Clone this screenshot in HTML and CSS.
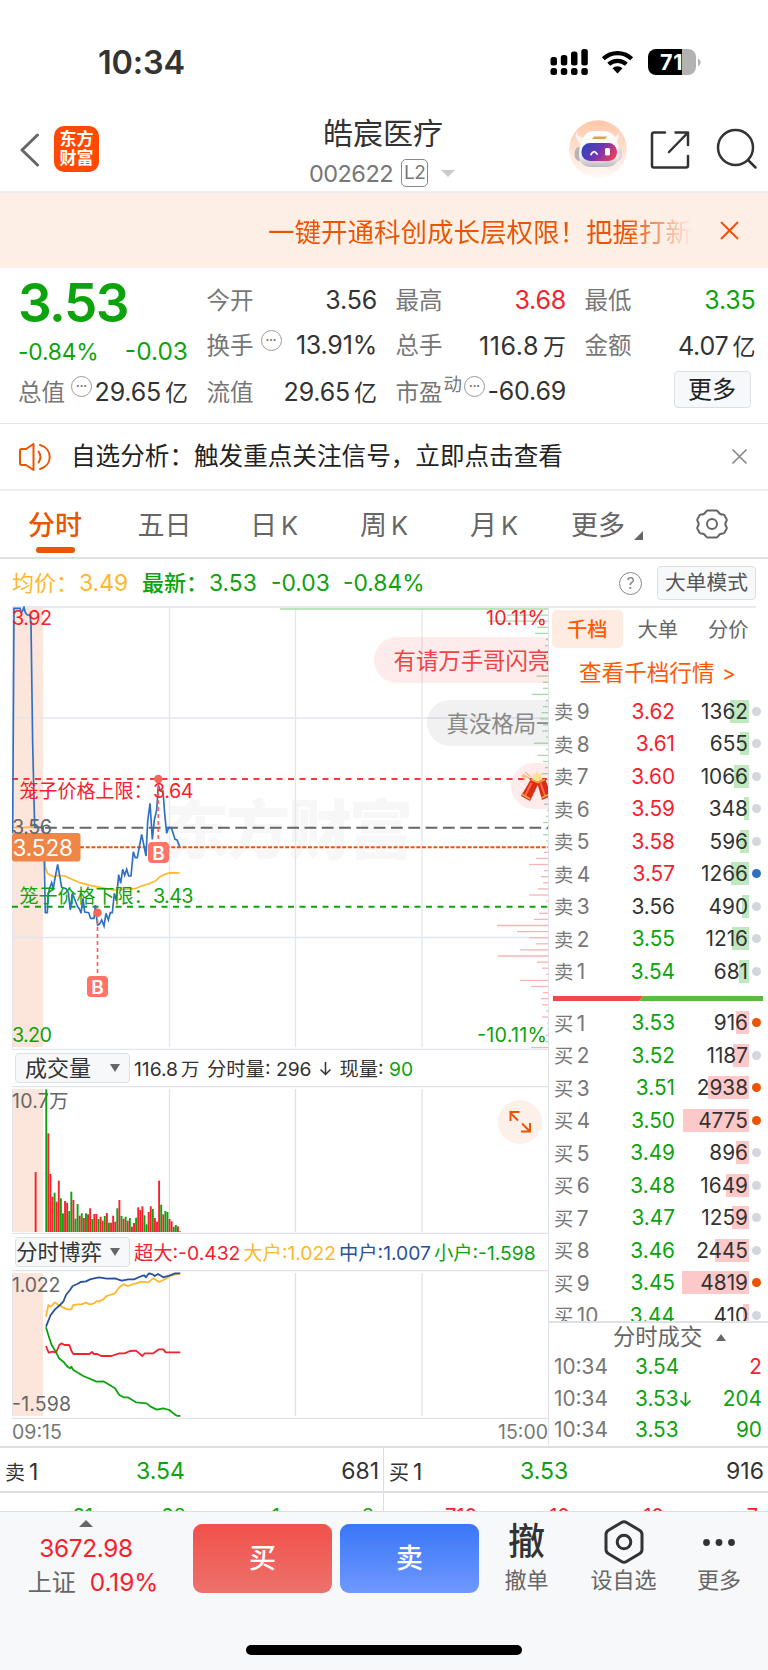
FILE: index.html
```html
<!DOCTYPE html>
<html lang="zh-CN">
<head>
<meta charset="utf-8">
<title>皓宸医疗 002622</title>
<link rel="stylesheet" href="styles.css">
</head>
<body>
<div class="screen">
  <div class="status">
    <span class="clock">10:34</span>
    <svg class="status-icons" width="152" height="28" viewBox="0 0 152 28">
      <g fill="#000">
        <rect x="0.5" y="9" width="6.5" height="8.500" rx="2.500"/><rect x="10.800" y="7" width="6.500" height="10.500" rx="2.500"/><rect x="21" y="3.500" width="6.500" height="14" rx="2.500"/><rect x="31.300" y="1" width="6.500" height="16.500" rx="2.500"/>
        <rect x="0.500" y="20" width="6.500" height="7" rx="2.500"/><rect x="10.800" y="20" width="6.500" height="7" rx="2.500"/><rect x="21" y="20" width="6.500" height="7" rx="2.500"/><rect x="31.300" y="20" width="6.500" height="7" rx="2.500"/>
      </g>
      <g fill="none" stroke="#000" stroke-width="4.200">
        <path d="M53.300 10.800a20.500 20.500 0 0 1 28.400 0"/><path d="M58.700 16.300a12.800 12.800 0 0 1 17.600 0"/>
      </g>
      <path d="M62.500 20.300a7.200 7.200 0 0 1 10 0l-5 5.200z" fill="#000"/>
      <clipPath id="bat"><rect x="98" y="1" width="48" height="26" rx="8"/></clipPath>
      <g clip-path="url(#bat)"><rect x="97" y="0" width="35" height="28" fill="#000"/><rect x="132" y="0" width="15" height="28" fill="#b2b2b2"/></g>
      <path d="M148 10.500q2.600 1 2.600 3.700t-2.600 3.700z" fill="#b2b2b2"/>
      <text x="110" y="21.800" font-size="21.500" font-weight="700" fill="#fff" textLength="22.500">71</text>
    </svg>
  </div>

  <div class="header">
    <div class="head-left">
      <svg width="21" height="34" viewBox="0 0 21 34"><path d="M18.500 2L3 17l15.500 15" fill="none" stroke="#666" stroke-width="3" stroke-linecap="round" stroke-linejoin="round"/></svg>
      <div class="logo"><span>东方</span><span>财富</span></div>
    </div>
    <div class="head-mid">
      <div class="stock-name">皓宸医疗</div>
      <div class="stock-code"><span class="code">002622</span><span class="l2">L2</span><i class="tri-down"></i></div>
    </div>
    <div class="head-right">
      <svg width="58" height="58" viewBox="0 0 58 58">
        <defs>
          <linearGradient id="halo" x1="0" y1="0" x2="0" y2="1"><stop offset="0" stop-color="#ffc7a8"/><stop offset="1" stop-color="#fffaf6"/></linearGradient>
          <linearGradient id="visor" x1="0" y1="0.200" x2="1" y2="0.600"><stop offset="0" stop-color="#2a45b8"/><stop offset="0.500" stop-color="#6b35b5"/><stop offset="1" stop-color="#ee3d5c"/></linearGradient>
          <linearGradient id="shell" x1="0" y1="0" x2="0" y2="1"><stop offset="0" stop-color="#fff"/><stop offset="0.700" stop-color="#f1eeee"/><stop offset="1" stop-color="#bdb9c0"/></linearGradient>
        </defs>
        <circle cx="29" cy="29" r="28.800" fill="url(#halo)"/>
        <path d="M7 12q-1 8 5 12l5-6q-8 0-10-6zM50 12q1 8-5 12l-5-6q8 0 10-6z" fill="#f8f4f4"/>
        <ellipse cx="10" cy="34" rx="4.500" ry="7" fill="#b9b2b8"/><ellipse cx="49" cy="34" rx="4.500" ry="7" fill="#ddd6da"/>
        <path d="M14 18q3-7 12-7h8q9 0 12 7 4 6 4 16 0 13-14 13H23Q10 47 10 35q0-11 4-17z" fill="url(#shell)"/>
        <path d="M23 19l2-2.500h13L36 19z" fill="#e59a5a"/>
        <rect x="12.500" y="23" width="35.500" height="18" rx="8.500" fill="url(#visor)"/>
        <path d="M22 34.500q3-5.500 6-.5" fill="none" stroke="#fff" stroke-width="1.800" stroke-linecap="round"/>
        <rect x="36" y="28" width="5" height="7.500" rx="1.500" fill="#fff"/>
      </svg>
      <svg class="share" width="40" height="40" viewBox="0 0 40 40" fill="none" stroke="#333" stroke-width="2.500"><path d="M15 2.500H4q-2 0-2 2v31q0 2 2 2h32q2 0 2-2V26" stroke-linecap="round"/><path d="M25.500 2.500h12.500V15M38 2.500L19 22" stroke-linecap="round" stroke-linejoin="round"/></svg>
      <svg class="search" width="42" height="42" viewBox="0 0 42 42" fill="none" stroke="#333" stroke-width="2.500" stroke-linecap="round"><circle cx="19.500" cy="19.500" r="17.500"/><path d="M32 32l7.500 7.500"/></svg>
    </div>
  </div>

  <div class="promo">
    <div class="promo-text">一键开通科创成长层权限！把握打新</div>
    <svg width="21" height="21" viewBox="0 0 21 21"><path d="M2 2l17 17M19 2L2 19" stroke="#ea5504" stroke-width="2"/></svg>
  </div>

  <div class="quote">
    <div class="big">3.53</div>
    <div class="cell a1"><label>今开</label><b>3.56</b></div>
    <div class="cell b1"><label>最高</label><b class="red">3.68</b></div>
    <div class="cell c1"><label>最低</label><b class="green">3.35</b></div>
    <div class="chg"><span class="chg-pct">-0.84%</span><span class="chg-abs">-0.03</span></div>
    <div class="cell a2"><label>换手<i class="dots">•••</i></label><b>13.91%</b></div>
    <div class="cell b2"><label>总手</label><b class="wide">116.8<u>万</u></b></div>
    <div class="cell c2"><label>金额</label><b>4.07<u>亿</u></b></div>
    <div class="cell l3"><label>总值<i class="dots">•••</i></label><b>29.65<u>亿</u></b></div>
    <div class="cell a3"><label>流值</label><b>29.65<u>亿</u></b></div>
    <div class="cell b3"><label>市盈<sup>动</sup><i class="dots near">•••</i></label><b>-60.69</b></div>
    <div class="more"><span>更多</span></div>
  </div>

  <div class="notice">
    <svg width="34" height="30" viewBox="0 0 34 30" fill="none" stroke="#ea5504" stroke-width="2" stroke-linejoin="round"><path d="M15.500 2L8 7H3.500Q2 7 2 9v12q0 2 1.500 2H8l7.500 5z"/><path d="M20.500 9.500q4 5.500 0 11M22 3c13 3.500 13 20.500 0 24" stroke-linecap="round"/></svg>
    <span class="notice-text">自选分析：触发重点关注信号，立即点击查看</span>
    <svg width="17" height="17" viewBox="0 0 17 17"><path d="M1.500 1.500l14 14M15.500 1.500l-14 14" stroke="#888" stroke-width="1.700"/></svg>
  </div>

  <div class="tabs">
    <span class="tab on">分时</span><span class="tab">五日</span><span class="tab">日<em>K</em></span><span class="tab">周<em>K</em></span><span class="tab">月<em>K</em></span><span class="tab tab-more">更多<svg width="9" height="9" viewBox="0 0 9 9"><path d="M9 0v9H0z" fill="#666"/></svg></span>
    <svg class="gear" width="34" height="34" viewBox="0 0 34 34" fill="none" stroke="#666" stroke-width="2" stroke-linejoin="round"><path d="M12.500 3.500h9q1 0 1.600 1.200c1.300 2.600 2.300 3 5 2.900q1 0 1.500 1l2 3.700q.5 1-.2 1.900c-1.600 2-1.600 3.500 0 5.600q.7.900.2 1.900l-2 3.700q-.5 1-1.500 1c-2.700-.1-3.700.3-5 2.900q-.6 1.200-1.600 1.200h-9q-1 0-1.600-1.200c-1.300-2.600-2.300-3-5-2.900q-1 0-1.500-1l-2-3.700q-.5-1 .2-1.900c1.600-2.100 1.600-3.600 0-5.600q-.7-.9-.2-1.900l2-3.700q.5-1 1.500-1c2.700.1 3.700-.3 5-2.900q.6-1.200 1.600-1.200z"/><circle cx="17" cy="17" r="5"/></svg>
  </div>

  <div class="info">
    <span class="orange">均价：<b>3.49</b></span><span class="green latest">最新：<b>3.53</b></span><b class="green d1">-0.03</b><b class="green d2">-0.84%</b>
    <i class="help">?</i><span class="mode">大单模式</span>
  </div>

  <div class="main">
    <div class="charts">
      <svg class="price-chart" width="536" height="444" viewBox="12 606 536 444">
        <rect x="12" y="608" width="31" height="439" fill="#fce5da"/>
        <text x="165" y="853" font-size="64" font-weight="900" fill="#f7f7f7" textLength="248">东方财富</text>
        <g stroke="#e3e6ee" stroke-width="1.300" fill="none"><path d="M12.500 606V1049M169.500 608V1047M295.500 608V1047M422 608V1047" /><path d="M12 718H548M12 937.500H548M12 1049.300H549" /></g>
        <g id="profile" stroke-width="1.300"></g>
        <g stroke-width="2" fill="none">
          <path d="M12 779H548" stroke="#ef3c3c" stroke-dasharray="6 5.500"/>
          <path d="M45 827.700H548" stroke="#666" stroke-dasharray="11.800 5.500"/>
          <path d="M80 847.200H548" stroke="#ea5504" stroke-dasharray="4 1.700"/>
          <path d="M12 906.800H548" stroke="#0da30d" stroke-dasharray="6 5.500"/>
        </g>
        <g transform="translate(0 600) scale(.33333)" fill="none" stroke-width="5" stroke-linejoin="miter">
          <path stroke="#ffb72c" d="M38 682H128L131 740L136 800L142 820L160 830L173 826L195 828L215 838L240 848L270 856L300 862L340 870L375 868L405 866L430 856L445 852L468 842L480 830L500 821L514 818L539 819"/>
          <path stroke="#2f70c4" d="M38 700L42 25H60L64 38L68 32L72 22L76 38L82 45H90L93 70L98 430L104 682H129L131 700L136 938H142L144 890L148 868L155 848L160 865L165 835L173 793L185 862L198 866L205 878L211 930L217 880L225 900L232 918L240 930L243 940L249 895L254 936L266 938L272 955H282L286 915L290 955L293 975L298 973L305 960L312 978L318 940L325 960L331 938H337L343 880L349 902L356 824L362 850L368 808L374 826L380 808L386 828H393L400 755L406 773H412L425 703L438 768L443 665L450 610L457 718L463 660L470 630L475 555L481 573H489L494 640L500 700L506 683H514L525 718L531 720L539 740"/>
        </g>
        <g stroke="#f8645a" stroke-width="1.700" stroke-dasharray="4 3" fill="none"><path d="M158.300 779V842M97.500 913V976"/></g>
        <circle cx="158.300" cy="779" r="4.200" fill="#f8645a"/><circle cx="97.500" cy="912.800" r="4.200" fill="#f8645a"/>
        <rect x="148" y="842" width="21" height="21" rx="4" fill="#ff7466"/><rect x="87" y="976" width="21" height="21" rx="4" fill="#ff7466"/>
        <text x="158.500" y="859.500" class="mark">B</text><text x="97.500" y="993.500" class="mark">B</text>
        <rect x="12" y="833" width="68.500" height="28.500" rx="3" fill="#f08548"/>
        <g font-size="19.800">
          <text x="12" y="625" fill="#f5222d" textLength="40">3.92</text>
          <text x="547" y="625" text-anchor="end" fill="#f5222d" textLength="61">10.11%</text>
          <text x="12" y="1042" fill="#0da30d" textLength="40">3.20</text>
          <text x="547" y="1042" text-anchor="end" fill="#0da30d" textLength="70">-10.11%</text>
          <text x="12" y="834" fill="#666" textLength="40">3.56</text>
          <text x="19.500" y="798" font-size="19" fill="#f5222d" textLength="133">笼子价格上限：</text><text x="153" y="798" fill="#f5222d" textLength="40.500">3.64</text>
          <text x="19.500" y="903" font-size="19" fill="#0da30d" textLength="133">笼子价格下限：</text><text x="153" y="903" fill="#0da30d" textLength="40.500">3.43</text>
        </g>
        <text x="12.500" y="855.500" font-size="22.500" fill="#fff" textLength="60.500">3.528</text>
        <rect x="374" y="637" width="240" height="46" rx="23" fill="#f5222d" fill-opacity=".09"/><text x="393.500" y="668.500" font-size="22.400" fill="#ee4444">有请万手哥闪亮登场</text>
        <rect x="427" y="700" width="240" height="46" rx="23" fill="#666" fill-opacity=".09"/><text x="446.500" y="731.500" font-size="22.400" fill="#888">真没格局一手</text>
        <rect x="511" y="763" width="240" height="46" rx="23" fill="#f5222d" fill-opacity=".09"/>
        <g>
          <path d="M529 778l-5-3 1 5-3-5M531 777l-6-5" stroke="#f3c08c" stroke-width="1.500" fill="none"/>
          <path d="M537 771l2 3 4-1-2 4 2 3-4 1-1 3-3-3-4 0 2-4-1-3 4 0z" fill="#ffe090"/>
          <path d="M531 779l8 3.500-9 18.500-9-5z" fill="#dd2c16"/><path d="M545 778l-8 4 5 18 9-4z" fill="#d92a16"/>
          <path d="M531.500 783l-6.500 13M540.500 783l5 14" stroke="#ff6c42" stroke-width="2"/>
          <path d="M521.500 794l8.500 5M541.500 798l8-4M531 779.500l7 3 7-3" stroke="#f0a53c" stroke-width="1.700" fill="none"/>
        </g>
      </svg>
      <div class="sub-head"><span class="pick">成交量<i class="tri"></i></span><span class="vol-text"><span>116.8<u>万</u></span><span>分时量: 296</span><svg width="13" height="15" viewBox="0 0 13 15"><path d="M6.500 1v12.500M1.500 8.500l5 5 5-5" fill="none" stroke="#333" stroke-width="1.500"/></svg><span>现量: <span class="green">90</span></span></span></div>
      <svg class="vol-chart" width="536" height="148" viewBox="12 1086 536 148">
        <rect x="12" y="1089" width="31" height="143" fill="#fce5da"/>
        <path d="M12 1086.500H549M12 1233.400H549M12.500 1089V1232M169.500 1089V1232M295.500 1089V1232M422 1089V1232" stroke="#dfe2e8" stroke-width="1.300"/>
        <text x="12" y="1107.500" font-size="19.500" fill="#666" textLength="56.500">10.7万</text>
        <g id="volume"></g>
        <circle cx="520" cy="1122" r="22" fill="#fdf0e9"/>
        <path d="M518 1120.500l-8-8M510.500 1121v-9h9M522 1123.500l8 8M530 1123v8.500h-9" stroke="#ea5504" stroke-width="2" fill="none"/>
      </svg>
      <div class="sub-head second"><span class="pick tight">分时博弈<i class="tri"></i></span><span class="game-text"><span class="red">超大:-0.432</span><span class="orange">大户:1.022</span><span class="blue">中户:1.007</span><span class="green">小户:-1.598</span></span></div>
      <svg class="game-chart" width="536" height="149" viewBox="12 1270 536 149">
        <rect x="12" y="1273" width="31" height="143" fill="#fce5da"/>
        <path d="M12 1270.500H549M12 1418.300H549M12.500 1273V1416M169.500 1273V1416M295.500 1273V1416M422 1273V1416" stroke="#dfe2e8" stroke-width="1.300"/>
        <g font-size="19.500" fill="#666"><text x="12" y="1292" textLength="48.500">1.022</text><text x="12" y="1410.500" textLength="59">-1.598</text></g>
        <g transform="translate(0 1040) scale(.33333)" fill="none" stroke-width="5.400" stroke-linejoin="round">
          <path stroke="#ffb72c" d="M138 830L145 795L152 800L165 787L175 795L190 803L202 808H214L220 795L232 793H245L258 788L270 793L282 790L290 783L295 785L310 778L320 768L345 760L358 742L371 733L383 738L408 730L425 725L445 727L460 715L477 726L500 715L510 708L540 700"/>
          <path stroke="#2a5298" d="M138 860L152 825L165 808L180 795L190 785L198 765L210 750L218 738L232 732L242 726L258 724L270 718L282 715L298 712L320 716L345 715L365 722L385 718L402 718L425 708L433 706L438 712L447 700L458 703L464 708L474 702L490 712L510 706L525 700H541"/>
          <path stroke="#f5222d" d="M138 918L146 938L158 935L168 938L178 915L184 910L194 915H208L214 932L220 942H268L276 936L282 942H292L303 948H334L358 940H374L390 933L408 932L427 948L434 940H460L477 928H490L497 937H541"/>
          <path stroke="#0da30d" d="M138 862L145 885L155 915L170 940L177 955L190 965L202 980L210 985L214 980L220 990L250 1008L290 1025L310 1024L345 1045L358 1065L371 1072H383L408 1087L440 1090L452 1100L470 1109L490 1105L508 1110L520 1120L530 1127L541 1128"/>
        </g>
      </svg>
      <div class="times"><span>09:15</span><span>15:00</span></div>
    </div>
    <div class="side">
      <div class="side-tabs"><span class="on">千档</span><span>大单</span><span>分价</span></div>
      <div class="side-link">查看千档行情 <em>&gt;</em></div>
      <div id="asks"></div>
      <svg class="ratio" width="210" height="5" viewBox="0 0 210 5"><path d="M0 0H90L86 5H0z" fill="#f04848"/><path d="M90 0H210V5H86z" fill="#5bbb40"/></svg>
      <div id="bids"></div>
      <div class="deals">
        <div class="deals-title">分时成交<svg width="10" height="7" viewBox="0 0 10 7"><path d="M5 0l5 7H0z" fill="#666"/></svg></div>
        <div class="deal"><span>10:34</span><b>3.54</b><b class="red">2</b></div>
        <div class="deal"><span>10:34</span><b>3.53<svg width="13" height="16" viewBox="0 0 13 16"><path d="M6.500 1v13.500M1.500 9.500l5 5 5-5" fill="none" stroke="#0da30d" stroke-width="1.700"/></svg></b><b>204</b></div>
        <div class="deal"><span>10:34</span><b>3.53</b><b>90</b></div>
      </div>
    </div>
  </div>

  <div class="level1">
    <div><span>卖<em>1</em></span><b class="green">3.54</b><span class="qty">681</span></div>
    <div><span>买<em>1</em></span><b class="green">3.53</b><span class="qty">916</span></div>
  </div>
  <div class="queue">
    <div class="green"><span>21</span><span>28</span><span>1</span><span>8</span></div>
    <div class="red"><span>710</span><span>10</span><span>10</span><span>7</span></div>
  </div>

  <div class="bottom">
    <div class="index">
      <svg width="14" height="7" viewBox="0 0 14 7"><path d="M7 0l7 7H0z" fill="#666"/></svg>
      <div class="idx red">3672.98</div>
      <div class="idx2">上证<span class="red">0.19%</span></div>
    </div>
    <div class="btn buy">买</div><div class="btn sell">卖</div>
    <div class="act act1"><span class="glyph">撤</span><span>撤单</span></div>
    <div class="act act2"><svg width="44" height="46" viewBox="0 0 44 46" fill="none" stroke="#333" stroke-width="3"><path d="M19.500 3.500q2.500-1.500 5 0l13 7.700q2.500 1.500 2.500 4.300v15q0 2.800-2.500 4.300l-13 7.700q-2.500 1.500-5 0l-13-7.700Q4 33.300 4 30.500v-15q0-2.800 2.500-4.300z"/><circle cx="22" cy="23" r="6.800"/></svg><span>设自选</span></div>
    <div class="act act3"><svg width="34" height="46" viewBox="0 0 34 46" fill="#333"><circle cx="4.500" cy="23.500" r="3.400"/><circle cx="17" cy="23.500" r="3.400"/><circle cx="29.500" cy="23.500" r="3.400"/></svg><span>更多</span></div>
    <div class="home"></div>
  </div>
</div>
<script src="app.js"></script>
</body>
</html>
```

FILE: styles.css
```css
* { box-sizing: border-box; }
body { margin: 0; background: #fff; color: #333; font-family: Inter, "Noto Sans CJK SC", sans-serif; }
svg { display: block; flex: none; overflow: hidden; }
b { font-weight: 400; }
i, em { font-style: normal; }
u { text-decoration: none; }
.red { color: #f5222d; }
.green { color: #0da30d; }
.orange { color: #ffb72c; }
.blue { color: #2a5298; }
.screen { width: 768px; height: 1670px; overflow: hidden; display: flex; flex-direction: column; white-space: nowrap; }

.status { height: 110px; padding: 48px 0 0 98px; display: flex; }
.clock { width: 452px; line-height: 29px; font-size: 32.500px; font-weight: 600; letter-spacing: -.2px; }

.header { height: 83px; border-bottom: 2px solid #ecedef; display: flex; }
.head-left { width: 290px; padding: 16px 0 0 19px; display: flex; gap: 14px; }
.head-left > svg { margin-top: 7px; }
.logo { width: 45px; height: 46px; border-radius: 10px; background: #ff4a00; color: #fff; display: flex; flex-direction: column; align-items: center; padding-top: 4px; font-size: 17px; font-weight: 700; line-height: 19px; }
.head-mid { width: 186px; display: flex; flex-direction: column; align-items: center; padding-top: 6px; }
.stock-name { font-size: 30px; line-height: 34px; color: #333; }
.stock-code { display: flex; align-items: center; height: 30px; margin-top: 8px; margin-left: -2px; color: #777; }
.code { font-size: 23.500px; letter-spacing: -.5px; }
.l2 { width: 27px; height: 28px; margin-left: 8px; border: 1.500px solid #888; border-radius: 5px; text-align: center; font-size: 19px; line-height: 26px; letter-spacing: -.5px; }
.tri-down { margin-left: 13px; border: 7px solid transparent; border-top-color: #ccc; border-bottom: 0; }
.head-right { flex: 1; display: flex; padding: 10px 0 0 93px; }
.share { margin: 10px 0 0 23px; }
.search { margin: 8px 0 0 26px; }

.promo { height: 75px; background: #fdeee6; display: flex; align-items: center; padding-left: 268px; }
.promo-text { width: 424px; height: 40px; line-height: 42px; overflow: hidden; font-size: 26.500px; background: linear-gradient(90deg, #ea5504 0, #ea5504 360px, #f3a27c 395px, #fdeee6 424px); -webkit-background-clip: text; background-clip: text; color: transparent; }
.promo svg { margin-left: 27px; }

.quote { height: 156px; border-bottom: 1.500px solid #e4e6ea; padding: 12px 12px 0 18px; display: grid; grid-template-columns: 170px 170.500px 170.500px 171px; column-gap: 18.500px; grid-template-rows: 40px 52px 40px; }
.big { font-size: 53px; line-height: 47px; font-weight: 600; color: #0da30d; letter-spacing: -1.500px; }
.cell { display: flex; justify-content: space-between; align-items: center; height: 39px; font-size: 23.500px; }
.cell label { color: #777; display: flex; align-items: center; margin-top: -1px; }
.cell b { font-size: 25px; letter-spacing: -.2px; }
.cell .wide { letter-spacing: .6px; }
.cell u { margin-left: 4px; font-size: 23px; letter-spacing: 0; }
.a2, .b2, .c2 { margin-top: 5px; }
.l3, .a3, .b3 { height: 38px; }
.cell sup { font-size: 18.500px; line-height: 20px; margin: -13px 0 0 1px; vertical-align: baseline; }
.dots { width: 21px; height: 21px; border: 1.500px solid #999; border-radius: 50%; font-size: 6.500px; line-height: 18px; text-align: center; margin: -8px 0 0 7px; color: #777; }
.l3 .dots { margin-left: 6px; margin-right: -5px; }
.dots.near { margin-left: 2px; margin-right: -5px; }
.chg { display: flex; justify-content: space-between; color: #0da30d; align-items: center; height: 40px; margin-top: 11px; }
.chg-pct { font-size: 22.800px; letter-spacing: -.2px; }
.chg-abs { font-size: 24.500px; }
.more { display: flex; justify-content: flex-end; }
.more span { width: 77px; height: 37px; margin: -1px 5px 0 0; border: 1.500px solid #dcdfe4; border-radius: 4px; background: #f7f8fa; font-size: 24px; line-height: 36px; text-align: center; color: #222; }

.notice { height: 67px; border-bottom: 2px solid #ecedef; padding: 0 20px 0 18px; display: flex; align-items: center; }
.notice-text { flex: 1; font-size: 24.600px; line-height: 30px; margin: -1px 0 0 19px; color: #222; }

.tabs { height: 68px; border-bottom: 2px solid #dfe1e6; display: grid; grid-template-columns: 110px 109px 110px 110px 110px 127px 1fr; color: #666; align-items: center; }
.tab { text-align: center; font-size: 27px; line-height: 69px; height: 66px; }
.tab em { margin-left: 4px; font-size: 25.500px; }
.tab.on { color: #ea5504; font-weight: 500; position: relative; }
.tab.on::after { content: ""; position: absolute; left: 36px; top: 56px; width: 39px; height: 6px; border-radius: 3px; background: #ea5504; }
.tab-more { display: flex; justify-content: flex-end; gap: 9px; padding-right: 33px; }
.tab-more svg { margin-top: 40px; }
.gear { margin-left: 19px; }

.info { height: 47px; display: flex; align-items: center; padding: 1px 12px 0 12px; font-size: 22px; line-height: 30px; }
.info b { font-size: 22.800px; }
.info .orange { width: 130px; }
.info .orange b, .latest b { margin-left: 1px; }
.latest { width: 129px; font-weight: 500; }
.d1 { width: 72px; }
.d2 { width: 276px; }
.help { width: 23px; height: 23px; border: 1.500px solid #888; border-radius: 50%; font-size: 16px; line-height: 20px; text-align: center; color: #888; }
.mode { margin-left: auto; width: 99px; height: 34px; border: 1.500px solid #dcdfe4; border-radius: 4px; background: #f7f8fa; color: #555; font-size: 20.700px; line-height: 31px; text-align: center; }

.main { height: 842px; display: flex; border-bottom: 2px solid #dcdee3; }
.charts { width: 549px; padding: 0 0 0 12px; height: 840px; border-right: 1px solid #dfe2e8; display: flex; flex-direction: column; background: linear-gradient(#e8eaef, #e8eaef) 12px 0 / 100% 2px no-repeat; }
.price-chart .mark { font-size: 19px; font-weight: 600; fill: #fff; text-anchor: middle; }
.sub-head { flex: none; height: 36px; display: flex; align-items: center; padding: 0 0 0 3px; }
.pick { width: 115px; height: 30px; border: 1.500px solid #dcdfe4; border-radius: 4px; background: #f7f8fa; font-size: 22px; line-height: 27px; padding: 0 9px; color: #333; display: flex; align-items: center; justify-content: space-between; }
.pick.tight { padding-left: 0; font-size: 21.500px; }
.tri { border: 5px solid transparent; border-top: 8px solid #666; border-bottom: 0; }
.vol-text { margin-left: 4px; display: flex; align-items: center; font-size: 19.300px; gap: 7.500px; }
.vol-text u { margin-left: 3px; font-size: 18.500px; }
.game-text { margin-left: 4px; font-size: 19.300px; display: flex; gap: 3px; }
.times { display: flex; justify-content: space-between; color: #777; font-size: 19.500px; line-height: 27px; }

.side { flex: 1; height: 840px; display: flex; flex-direction: column; background: linear-gradient(#e8eaef, #e8eaef) 0 0 / 207px 2px no-repeat; }
.side-tabs { display: flex; padding: 4px 0 0 3px; line-height: 39px; font-size: 20.300px; color: #666; }
.side-tabs span { width: 70.500px; text-align: center; height: 38px; }
.side-tabs .on { background: #feece2; border-radius: 5px; color: #ff5a00; font-weight: 500; }
.side-link { height: 47px; line-height: 50px; padding-left: 30px; color: #ff5a00; font-size: 22.600px; }
.side-link em { font-size: 21px; margin-left: 1px; }
.row { display: grid; grid-template-columns: 46px 75px 74px; height: 32.500px; align-items: center; padding-left: 5px; font-size: 20.800px; position: relative; }
.row label { color: #777; font-size: 19.300px; }
.row label em { font-size: 20.800px; margin-left: 3.500px; }
.row b { text-align: right; }
.row .q { text-align: right; color: #333; padding-right: 1px; line-height: 23px; background: linear-gradient(var(--tone), var(--tone)) right / var(--w) 23px no-repeat; }
.row .dot { position: absolute; left: 202.500px; top: 11.500px; width: 9px; height: 9px; border-radius: 50%; background: #d3d6dc; }
.row .dot.o { background: #ea5504; }
.row .dot.b { background: #2f70c4; }
.ratio { margin: 8px 0 6px 4px; }
#bids { height: 314.500px; overflow: hidden; }
.deals { border-top: 2px solid #dfe1e6; flex: 1; }
.deals-title { height: 28px; line-height: 28px; padding-left: 64px; display: flex; align-items: center; gap: 14px; font-size: 22.300px; color: #666; }
.deal { display: grid; grid-template-columns: 81px 58px 1fr; height: 31.500px; line-height: 32px; font-size: 20.800px; padding: 0 6px 0 5px; color: #0da30d; }
.deal span { color: #777; }
.deal b { display: flex; align-items: center; }
.deal b:last-child { justify-content: flex-end; }

.level1, .queue { display: flex; }
.level1 > div { width: 384px; height: 45px; display: grid; grid-template-columns: 131px 1fr 1fr; align-items: center; padding: 3px 4px 0 5px; font-size: 23px; border-right: 1.500px solid #dcdee3; border-bottom: 2px solid #dcdee3; }
.level1 > div + div { border-right: 0; }
.level1 span { font-size: 20px; }
.level1 em, .level1 .qty { font-size: 23px; }
.level1 em { margin-left: 4px; }
.level1 .qty { text-align: right; }
.queue { height: 19px; overflow: hidden; border-bottom: 1.500px solid #dcdee3; }
.queue > div { flex: none; width: 384px; height: 48px; display: grid; grid-template-columns: 93px 93px 94px 94px; text-align: right; font-size: 20px; line-height: 47px; border-right: 1.500px solid #dcdee3; }
.queue > div + div { border-right: 0; }

.bottom { flex: 1; background: #f7f8fa; display: flex; align-items: flex-start; position: relative; }
.index { width: 193px; display: flex; flex-direction: column; align-items: center; padding: 8px 21px 0 0; }
.idx { font-size: 24.300px; line-height: 34px; margin-top: 4px; letter-spacing: -.3px; }
.idx2 { font-size: 24px; line-height: 32px; color: #666; padding-left: 14px; margin-top: 1px; }
.idx2 span { margin-left: 14px; font-size: 24.500px; letter-spacing: -.1px; }
.btn { width: 139px; height: 69px; margin: 12px 8px 0 0; border-radius: 9px; color: #fff; font-size: 27px; font-weight: 500; line-height: 70px; text-align: center; }
.buy { background: linear-gradient(#f2504b, #ec726b); }
.sell { background: linear-gradient(#3a76f8, #6e99ff); }
.act { display: flex; flex-direction: column; align-items: center; font-size: 22px; line-height: 28px; color: #666; padding-top: 7px; }
.act svg, .glyph { margin-bottom: 1px; }
.glyph { height: 46px; line-height: 46px; font-size: 37px; font-weight: 500; color: #333; }
.act1 { width: 79px; }
.act2 { width: 115px; }
.act3 { width: 76px; }
.home { position: absolute; left: 246px; top: 133px; width: 276px; height: 10px; border-radius: 5px; background: #000; }
```

FILE: app.js
```js
const RED = '#f5222d', GREEN = '#0da30d', INK = '#333';

function rows(id, side, tone, list) {
  document.getElementById(id).innerHTML = list.map(([n, price, color, qty, w, dot]) =>
    `<div class="row"><label>${side}<em>${n}</em></label><b style="color:${color}">${price}</b>` +
    `<span class="q" style="--w:${w}px;--tone:${tone}">${qty}</span><i class="dot ${dot || ''}"></i></div>`).join('');
}
rows('asks', '卖', '#bfe8bf', [
  [9, '3.62', RED, 1362, 19], [8, '3.61', RED, 655, 9], [7, '3.60', RED, 1066, 15],
  [6, '3.59', RED, 348, 5], [5, '3.58', RED, 596, 9], [4, '3.57', RED, 1266, 18, 'b'],
  [3, '3.56', INK, 490, 7], [2, '3.55', GREEN, 1216, 17], [1, '3.54', GREEN, 681, 10]
]);
rows('bids', '买', '#fdc8c8', [
  [1, '3.53', GREEN, 916, 13, 'o'], [2, '3.52', GREEN, 1187, 16], [3, '3.51', GREEN, 2938, 41, 'o'],
  [4, '3.50', GREEN, 4775, 66, 'o'], [5, '3.49', GREEN, 896, 13], [6, '3.48', GREEN, 1649, 23],
  [7, '3.47', GREEN, 1259, 17], [8, '3.46', GREEN, 2445, 34], [9, '3.45', GREEN, 4819, 67, 'o'],
  [10, '3.44', GREEN, 410, 6]
]);

// Minute volume: colour letter followed by bar height in thirds of a pixel.
const vol = 'g428 r296 r174 r106 g118 r91 r154 g101 g56 r93 r88 g63 g121 r96 g40 g84 r49 g56 r42 g56 r53 r71 g39 r54 r54 g39 r46 r34 g48 r57 g28 r28 r49 r31 g71 r96 g48 r40 g46 r34 g42 r16 r27 g43 r74 r66 r77 g50 g23 r60 r77 g69 r42 r31 r154 g82 r53 g63 g60 r39 r32 g16 g21 r17 g2'.split(' ');
let bars = '<rect x="34.7" y="1172" width="1.9" height="60" fill="#f5222d"/>';
vol.forEach((v, i) => {
  const h = +v.slice(1) / 3;
  bars += `<rect x="${(45.3 + i * 2.09).toFixed(2)}" y="${(1232 - h).toFixed(1)}" width="1.9" height="${h.toFixed(1)}" fill="${v[0] === 'r' ? RED : GREEN}"/>`;
});
document.getElementById('volume').innerHTML = bars;

// Depth profile: bar lengths in pixels, one per price step.
const up = [268, 41, 60, 11, 13, 2, 3, 2, 4, 2, 5, 11.5, 5, 5, 16, 2, 5, 6.5, 8, 5, 5.5, 2, 14, 2, 10.5, 5, 3, 6.5, 6.5, 6.5, 3, 1, 4, 1, 2, 5, 3, 5, 2];
const down = [4, 12, 19, 4, 7, 5, 10, 19, 2, 2, 9, 14, 51, 31, 19, 12, 28, 50, 11, 6, 2, 28, 17, 5, 7, 6, 2, 6, 1, 1, 2, 3, 17];
let lines = '';
up.forEach((w, i) => { const y = 609 + i * 6.1; lines += `<path d="M${548 - w} ${y.toFixed(1)}H548" stroke="#a6dca6"/>`; });
down.forEach((w, i) => { const y = 852.3 + i * 6.1; lines += `<path d="M${548 - w} ${y.toFixed(1)}H548" stroke="#f9b5b5"/>`; });
document.getElementById('profile').innerHTML = lines;
```
